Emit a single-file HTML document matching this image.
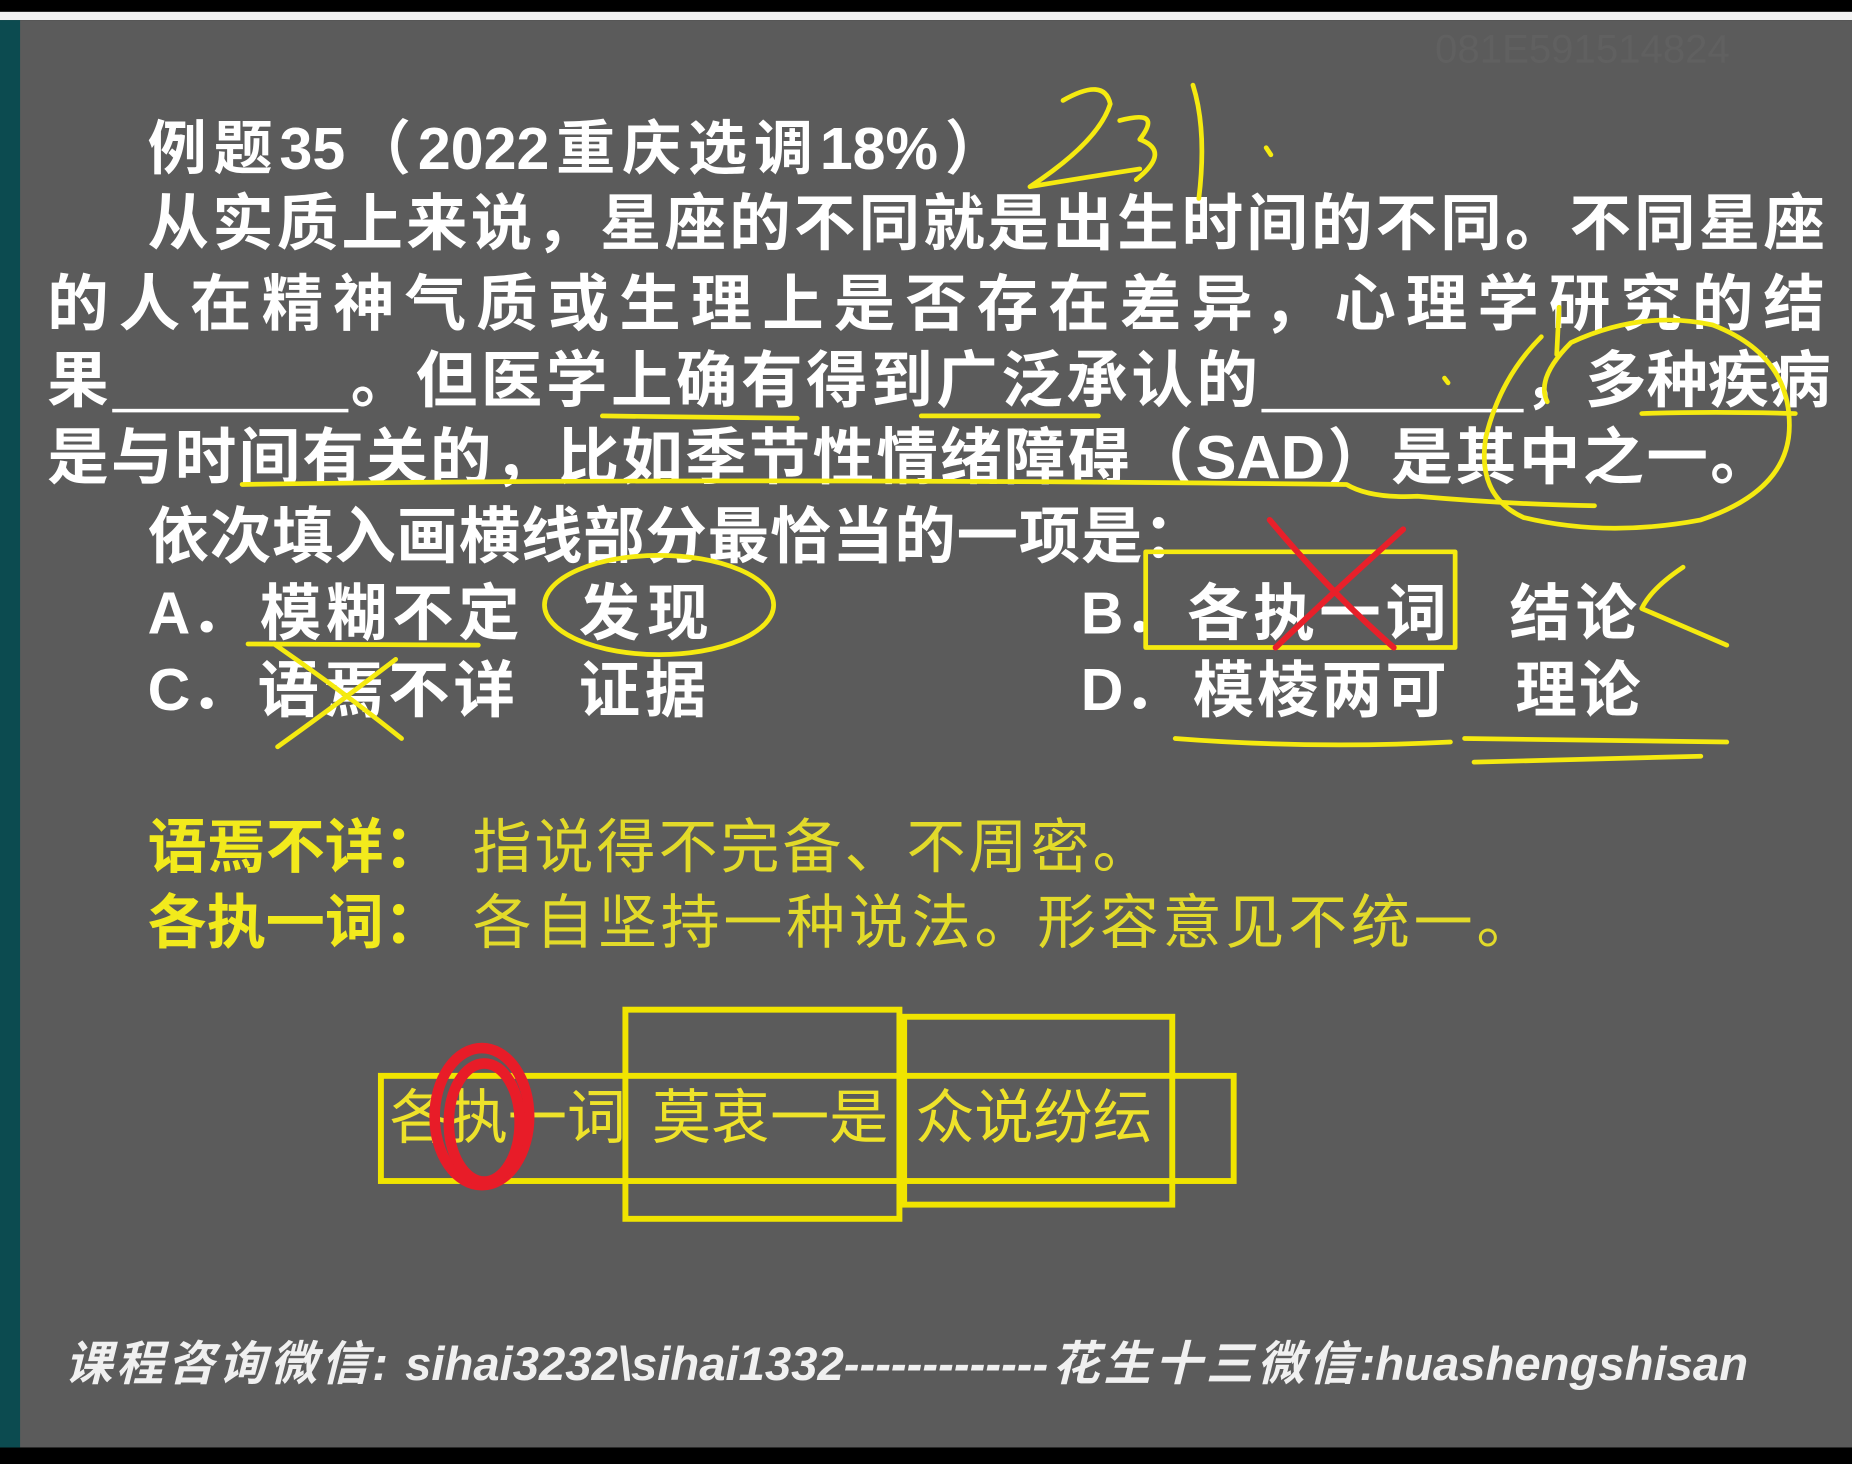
<!DOCTYPE html>
<html><head><meta charset="utf-8"><style>
html,body{margin:0;padding:0;background:#000;overflow:hidden;}
#page{width:1852px;height:1464px;position:relative;background:#000;overflow:hidden;}
#w{position:absolute;left:0;top:0;width:1568px;height:1239px;transform:scale(1.18112,1.18160);transform-origin:0 0;}
.slide{position:absolute;left:0;top:17px;width:1568px;height:1208px;background:#5b5b5b;}
.strip{position:absolute;left:0;top:17px;width:17px;height:1208px;background:#0c4b50;}
.wl{position:absolute;left:0;top:10px;width:1568px;height:7px;background:#f2f2f2;}
.t{position:absolute;white-space:nowrap;font-family:"Liberation Sans","Noto Sans CJK SC",sans-serif;font-weight:bold;color:#fff;line-height:1;}
.j{text-align:justify;text-align-last:justify;}
.y{color:#f2ea1c;}
.yn{color:#e2da2a;font-weight:normal;}
.bl{position:absolute;height:0;border-top:3px solid #fff;}
.box{position:absolute;border:5px solid #f0e400;box-sizing:border-box;}
</style></head><body><div id="page"><div id="w">
<div class="wl"></div>
<div class="slide"></div>
<div class="strip"></div>
<div class="t" style="left:1215px;top:25px;font-size:34px;color:#606060;font-weight:normal;">081E591514824</div>

<div class="t j" style="left:125px;top:101px;width:725px;font-size:50px;">例题35（2022重庆选调18%）</div>
<div class="t j" style="left:125px;top:164px;width:1420px;font-size:52px;">从实质上来说，星座的不同就是出生时间的不同。不同星座</div>
<div class="t j" style="left:40px;top:232px;width:1505px;font-size:52px;">的人在精神气质或生理上是否存在差异，心理学研究的结</div>
<div class="t" style="left:40px;top:297px;font-size:52px;">果</div>
<div class="bl" style="left:95px;top:346px;width:200px;"></div>
<div class="t j" style="left:297px;top:297px;width:768px;font-size:52px;">。但医学上确有得到广泛承认的</div>
<div class="bl" style="left:1068px;top:346px;width:222px;"></div>
<div class="t j" style="left:1290px;top:297px;width:255px;font-size:52px;">，多种疾病</div>
<div class="t j" style="left:40px;top:362px;width:1460px;font-size:52px;">是与时间有关的，比如季节性情绪障碍（SAD）是其中之一。</div>
<div class="t j" style="left:125px;top:429px;width:895px;font-size:52px;">依次填入画横线部分最恰当的一项是：</div>

<div class="t" style="left:125px;top:494px;font-size:50px;">A．</div>
<div class="t j" style="left:220px;top:494px;width:220px;font-size:52px;">模糊不定</div>
<div class="t j" style="left:490px;top:494px;width:110px;font-size:52px;">发现</div>
<div class="t" style="left:915px;top:494px;font-size:50px;">B．</div>
<div class="t j" style="left:1005px;top:494px;width:220px;font-size:52px;">各执一词</div>
<div class="t j" style="left:1278px;top:494px;width:108px;font-size:52px;">结论</div>
<div class="t" style="left:125px;top:559px;font-size:50px;">C．</div>
<div class="t j" style="left:218px;top:559px;width:218px;font-size:52px;">语焉不详</div>
<div class="t j" style="left:490px;top:559px;width:108px;font-size:52px;">证据</div>
<div class="t" style="left:915px;top:559px;font-size:50px;">D．</div>
<div class="t j" style="left:1010px;top:559px;width:215px;font-size:52px;">模棱两可</div>
<div class="t j" style="left:1283px;top:559px;width:106px;font-size:52px;">理论</div>

<div class="t j y" style="left:125px;top:692px;width:245px;font-size:50px;">语焉不详：</div>
<div class="t j yn" style="left:400px;top:692px;width:575px;font-size:50px;">指说得不完备、不周密。</div>
<div class="t j y" style="left:125px;top:756px;width:245px;font-size:50px;">各执一词：</div>
<div class="t j yn" style="left:400px;top:756px;width:900px;font-size:50px;">各自坚持一种说法。形容意见不统一。</div>

<div class="box" style="left:320px;top:908px;width:727px;height:94px;"></div>
<div class="box" style="left:527px;top:852px;width:237px;height:182px;"></div>
<div class="box" style="left:763px;top:858px;width:232px;height:164px;"></div>
<div class="t j yn" style="left:330px;top:921px;width:195px;font-size:50px;color:#eee22a;">各执一词</div>
<div class="t j yn" style="left:552px;top:921px;width:196px;font-size:50px;color:#eee22a;">莫衷一是</div>
<div class="t j yn" style="left:775px;top:921px;width:195px;font-size:50px;color:#eee22a;">众说纷纭</div>

<div class="t j" style="left:55px;top:1135px;width:1425px;font-size:40px;font-style:italic;color:#f0f0f0;">课程咨询微信: sihai3232\sihai1332-------------花生十三微信:huashengshisan</div>

<svg style="position:absolute;left:0;top:0" width="1568" height="1239" viewBox="0 0 1568 1239" fill="none" stroke-linecap="round" stroke-linejoin="round">
<g stroke="#f5ea10" stroke-width="4">
<path d="M900 85 Q935 65 940 88 Q930 120 872 158 Q920 150 965 143"/>
<path d="M948 102 Q985 92 965 118 Q992 128 962 152"/>
<path d="M1010 72 Q1022 110 1015 168"/>
<path d="M1072 125 l4 6"/>
<path d="M510 352 L675 354"/>
<path d="M780 352 L930 352"/>
<path d="M205 410 Q600 404 1140 410 Q1160 422 1200 420 Q1280 427 1350 428"/>
<path d="M1305 285 Q1270 320 1258 370 Q1250 420 1290 438 Q1360 455 1440 440 Q1515 415 1515 360 Q1515 300 1450 275 Q1390 262 1330 290 Q1300 320 1310 340"/>
<path d="M1320 260 L1318 300"/>
<path d="M1390 350 Q1450 348 1520 350"/>
<path d="M1223 320 l3 4"/>
<ellipse cx="558" cy="512" rx="97" ry="42"/>
<path d="M210 545 L405 546"/>
<path d="M232 545 Q290 585 340 625 M335 558 Q280 600 235 632"/>
<rect x="970" y="467" width="262" height="81"/>
<path d="M1425 480 Q1398 498 1390 515 Q1425 530 1462 546"/>
<path d="M995 625 Q1110 634 1228 628"/>
<path d="M1240 625 L1462 628 M1248 645 L1440 640"/>
</g>
<g stroke="#e8202a" stroke-width="5">
<path d="M1075 440 Q1125 500 1180 548 M1188 448 Q1130 500 1080 548"/>
</g>
<g stroke="#e81c28" stroke-width="9">
<ellipse cx="408" cy="945" rx="40" ry="58"/>
<ellipse cx="410" cy="950" rx="30" ry="50"/>
</g>
</svg>
</div></div></body></html>
